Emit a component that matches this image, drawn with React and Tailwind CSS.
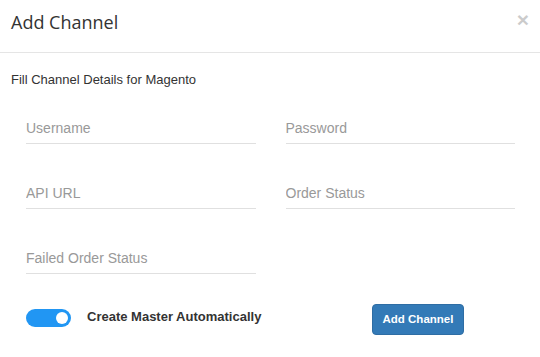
import { useState } from 'react';

const fields = ['Username', 'Password', 'API URL', 'Order Status', 'Failed Order Status'];

export default function App() {
  const [autoMaster, setAutoMaster] = useState(true);

  return (
    <div className="w-[540px] h-[357px] bg-white text-[#333] font-['Liberation_Sans',Arial,sans-serif]">
      {/* Header */}
      <div className="flex items-start justify-between h-[53px] border-b border-[#e5e5e5] pl-[11px] pr-[11px]">
        <h4 className="pt-[10px] text-[18px] leading-[25px] font-['Open_Sans',sans-serif] text-[#333]">Add Channel</h4>
        <button className="mt-[9px] text-[21px] font-bold leading-[21px] text-black opacity-20">×</button>
      </div>

      {/* Body */}
      <div className="px-[11px] pt-[19px]">
        <p className="text-[13px] leading-[15px] text-[#333]">Fill Channel Details for Magento</p>

        <div className="grid grid-cols-2 gap-x-[30px] gap-y-[34px] pl-[15px] pr-[14px] mt-[26px]">
          {fields.map((f) => (
            <input
              key={f}
              type={f === 'Password' ? 'password' : 'text'}
              placeholder={f}
              className="h-[31px] w-full border-b border-[#e0e0e0] bg-transparent text-[14px] text-[#555] placeholder:text-[#999] outline-none"
            />
          ))}
        </div>

        <div className="grid grid-cols-2 gap-x-[30px] pl-[15px] pr-[14px] mt-[30px]">
          <div className="flex items-center gap-[16px] h-[30px]">
            <button
              onClick={() => setAutoMaster(!autoMaster)}
              className={`relative shrink-0 -mt-[3px] w-[45px] h-[18px] rounded-full ${autoMaster ? 'bg-[#2196f3]' : 'bg-[#ccc]'}`}
            >
              <span
                className={`absolute top-[3px] w-[12px] h-[12px] rounded-full bg-white ${autoMaster ? 'left-[30px]' : 'left-[3px]'}`}
              />
            </button>
            <span className="whitespace-nowrap text-[13px] font-bold text-[#333] -mt-[5px]">Create Master Automatically</span>
          </div>
          <div className="pl-[86px]">
            <button className="h-[31px] px-[10px] rounded-[4px] bg-[#337ab7] border border-[#2e6da4] text-white text-[11.5px] font-bold whitespace-nowrap">
              Add Channel
            </button>
          </div>
        </div>
      </div>
    </div>
  );
}
